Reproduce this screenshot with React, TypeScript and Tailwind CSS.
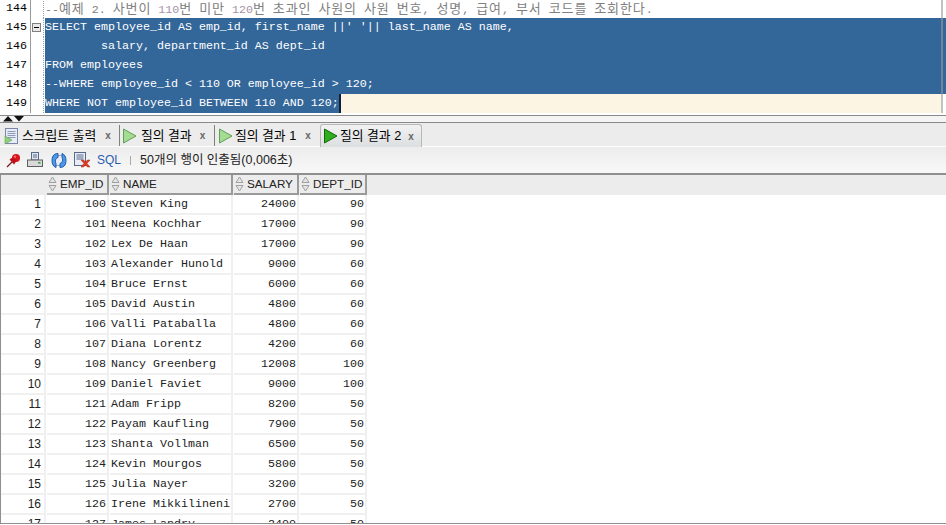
import React from "react";

const mono = "font-['Liberation_Mono',monospace] text-[11.67px]";
const kr = "font-['Liberation_Sans','Noto_Sans_CJK_KR',sans-serif]";

const rows: [number, number, string, number, number][] = [
  [1, 100, "Steven King", 24000, 90],
  [2, 101, "Neena Kochhar", 17000, 90],
  [3, 102, "Lex De Haan", 17000, 90],
  [4, 103, "Alexander Hunold", 9000, 60],
  [5, 104, "Bruce Ernst", 6000, 60],
  [6, 105, "David Austin", 4800, 60],
  [7, 106, "Valli Pataballa", 4800, 60],
  [8, 107, "Diana Lorentz", 4200, 60],
  [9, 108, "Nancy Greenberg", 12008, 100],
  [10, 109, "Daniel Faviet", 9000, 100],
  [11, 121, "Adam Fripp", 8200, 50],
  [12, 122, "Payam Kaufling", 7900, 50],
  [13, 123, "Shanta Vollman", 6500, 50],
  [14, 124, "Kevin Mourgos", 5800, 50],
  [15, 125, "Julia Nayer", 3200, 50],
  [16, 126, "Irene Mikkilineni", 2700, 50],
  [17, 127, "James Landry", 2400, 50],
];

const code = [
  "SELECT employee_id AS emp_id, first_name ||' '|| last_name AS name,",
  "        salary, department_id AS dept_id",
  "FROM employees",
  "--WHERE employee_id < 110 OR employee_id > 120;",
  "WHERE NOT employee_id BETWEEN 110 AND 120;",
];

const comment = "--예제 2. 사번이 110번 미만 120번 초과인 사원의 사원 번호, 성명, 급여, 부서 코드를 조회한다.";

function Comment() {
  return (
    <span className={`${mono} whitespace-pre pt-px text-[#808080]`}>
      {comment.split(/([가-힣]+|\d{3})/).map((part, i) =>
        /[가-힣]/.test(part) ? (
          <span key={i} className="font-['Noto_Sans_CJK_KR',sans-serif] text-[13px] tracking-[0.9px]">{part}</span>
        ) : /\d{3}/.test(part) ? (
          <span key={i} className="text-[#a593a8]">{part}</span>
        ) : (
          <span key={i}>{part}</span>
        )
      )}
    </span>
  );
}

function Play({ dark }: { dark?: boolean }) {
  return (
    <svg width="15" height="16" viewBox="0 0 15 16" className="shrink-0">
      <path d="M1.5 1 L14 8 L1.5 15 Z" fill={dark ? "#2fae1e" : "#a5dc92"} stroke={dark ? "#17660f" : "#5f9e55"} strokeWidth="1" />
    </svg>
  );
}

function ScriptIcon() {
  return (
    <svg width="15" height="16" viewBox="0 0 15 16" className="shrink-0">
      <rect x="1.5" y="0.5" width="12" height="15" fill="#e8ecf6" stroke="#7c86a8" />
      <path d="M3.5 3.5H11.5M3.5 5.5H11.5M3.5 7.5H11.5M3.5 9.5H11.5" stroke="#8e98bb" />
      <path d="M1 8 L8 12 L1 16 Z" fill="#8fd07a" stroke="#5f9e55" strokeWidth="0.6" />
    </svg>
  );
}

function TabText({ label, cls, xCls }: { label: string; cls: string; xCls: string }) {
  return (
    <>
      <span className={`${kr} ${cls} text-[12.8px] whitespace-nowrap text-black`}>{label}</span>
      <span className={`${xCls} font-['Liberation_Sans',sans-serif] text-[10px] font-bold text-[#666]`}>x</span>
    </>
  );
}

function HeaderCell({ w, label }: { w: string; label: string }) {
  return (
    <div className={`${w} ml-px flex h-[20px] shrink-0 items-center border-r-2 border-b-2 border-[#9a9a9a]`}>
      <svg width="11" height="16" viewBox="0 0 11 16" className="shrink-0">
        <path d="M5.5 1 L9 6.5 H2 Z M5.5 15 L2 9.5 H9 Z" fill="#e4e4e4" stroke="#a0a0a0" />
      </svg>
      <span className={`${kr} ml-[2px] text-[11.7px] text-[#222]`}>{label}</span>
    </div>
  );
}

const cell = "ml-px flex shrink-0 items-center border-r-2 border-b-2 border-[#f0f0f0] pt-px text-[#222]";

export default function App() {
  return (
    <div className="flex h-[525px] w-[946px] flex-col overflow-hidden bg-white">
      {/* editor */}
      <div className="relative flex h-[113px] shrink-0 flex-col justify-end overflow-hidden bg-white">
        <div className="flex h-[19px] shrink-0 items-center">
          <div className={`flex h-full w-[31px] shrink-0 items-center justify-end border-r border-[#9a9a9a] pt-px pr-[3px] ${mono} text-black`}>144</div>
          <div className="h-full w-[13px] shrink-0 border-r border-dotted border-[#a0a0a0]" />
          <div className="w-px shrink-0" />
          <Comment />
        </div>
        {code.map((line, i) => (
          <div key={i} className="flex h-[19px] shrink-0 items-center">
            <div className={`flex h-full w-[31px] shrink-0 items-center justify-end border-r border-[#9a9a9a] pt-px pr-[3px] ${mono} text-black`}>{145 + i}</div>
            <div className="flex h-full w-[13px] shrink-0 items-center border-r border-dotted border-[#a0a0a0] pl-px">
              {i === 0 && (
                <div className="flex h-[9px] w-[9px] items-center justify-center border border-[#808080] bg-[#e8e8e8]">
                  <div className="h-px w-[5px] bg-black" />
                </div>
              )}
            </div>
            <div className="w-px shrink-0" />
            {i === 4 ? (
              <div className="flex h-full w-[896px] shrink-0 bg-[#fdf5e3]">
                <div className={`flex h-full w-[296px] items-center border-r-2 border-[#10203a] bg-[#336699] pt-px ${mono} whitespace-pre text-white`}>{line}</div>
              </div>
            ) : (
              <div className={`flex h-full flex-1 items-center bg-[#336699] pt-px ${mono} whitespace-pre text-white`}>{line}</div>
            )}
          </div>
        ))}
        <div className="absolute top-0 bottom-0 left-[941px] w-[2px] bg-[#999999] opacity-60" />
      </div>

      {/* splitter */}
      <div className="mt-[2px] flex h-[8px] shrink-0 items-center border-y border-[#8a8a8a] bg-[#f4f4f4] pl-[3px]">
        <svg width="21" height="6" viewBox="0 0 21 6">
          <path d="M0 5.5 L5 0 L10 5.5 Z M11 0 L21 0 L16 5.5 Z" fill="#111" />
        </svg>
      </div>

      {/* tabs */}
      <div className="flex h-[24px] shrink-0 items-end border-b border-white bg-[#ececec] pl-[4px]">
        <div className="flex h-[21px] w-[116px] shrink-0 items-center border-r border-[#808080]">
          <ScriptIcon />
          <TabText label="스크립트 출력" cls="ml-[3px]" xCls="ml-[9px]" />
        </div>
        <div className="flex h-[21px] w-[95px] shrink-0 items-center border-r border-[#808080] pl-[2px]">
          <Play />
          <TabText label="질의 결과" cls="ml-[4px]" xCls="ml-[8px]" />
        </div>
        <div className="flex h-[21px] w-[105px] shrink-0 items-center pl-[3px]">
          <Play />
          <TabText label="질의 결과 1" cls="ml-[2px]" xCls="ml-[9px]" />
        </div>
        <div className="-mb-px flex h-[23px] w-[102px] shrink-0 items-center rounded-t-[3px] border border-b-0 border-[#b8b8b8] bg-gradient-to-b from-[#f2f2f2] to-[#dcdee0] pl-[2px]">
          <Play dark />
          <TabText label="질의 결과 2" cls="ml-[2px]" xCls="ml-[7px]" />
        </div>
      </div>

      {/* toolbar */}
      <div className="flex h-[26px] shrink-0 items-center bg-gradient-to-b from-[#ececec] to-[#f8f8f8] pl-[6px]">
        <svg width="15" height="15" viewBox="0 0 15 15" className="shrink-0">
          <path d="M1 14 L6 9" stroke="#7a1a1a" strokeWidth="1.2" />
          <circle cx="10" cy="5" r="4" fill="#d8141c" />
          <path d="M3.5 6.5 L8 11.5 L10.5 8 L7 4 Z" fill="#c01018" />
          <circle cx="9" cy="3.8" r="1.2" fill="#f26a6a" />
        </svg>
        <svg width="16" height="16" viewBox="0 0 16 16" className="ml-[6px] shrink-0">
          <rect x="4.5" y="0.5" width="7" height="7.5" fill="#dfe6f2" stroke="#5a6a8a" />
          <path d="M6 3H10M6 5H10" stroke="#5a6a8a" />
          <rect x="0.5" y="8" width="15" height="6.5" fill="#d9d9d9" stroke="#5f5f5f" />
          <rect x="11" y="10" width="2.5" height="1.5" fill="#32a032" />
        </svg>
        <svg width="16" height="17" viewBox="0 0 16 16" className="ml-[8px] shrink-0">
          <rect x="4" y="3" width="8" height="10" fill="#e8ecf6" stroke="#7c86a8" strokeWidth="0.7" />
          <path d="M7 1 C2 1 1 5 1 8 C1 11 2 14 5 15 L5 11 C4 9 4 6 7 5 Z" fill="#4f97e6" stroke="#1d5eae" />
          <path d="M9 15 C14 15 15 11 15 8 C15 5 14 2 11 1 L11 5 C12 7 12 10 9 11 Z" fill="#4f97e6" stroke="#1d5eae" />
        </svg>
        <svg width="17" height="16" viewBox="0 0 17 16" className="ml-[7px] shrink-0">
          <rect x="0.5" y="0.5" width="11" height="13" fill="#e8ecf6" stroke="#5a6a8a" />
          <path d="M2.5 3H9.5M2.5 5H9.5M2.5 7H9.5" stroke="#5a6a8a" />
          <path d="M7 8 L9.5 8 L11.5 10 L13.5 8 L16 8 L13 11.5 L16 15 L13.5 15 L11.5 13 L9.5 15 L7 15 L10 11.5 Z" fill="#e23a1f" stroke="#a32410" strokeWidth="0.5" />
        </svg>
        <span className={`${kr} ml-[6px] text-[12px] text-[#2a5db0]`}>SQL</span>
        <div className="ml-[9px] h-[9px] w-px bg-[#a8a8a8]" />
        <span className={`${kr} ml-[9px] text-[12.5px] text-[#222]`}>50개의 행이 인출됨(0,006초)</span>
      </div>

      {/* grid */}
      <div className="mb-px flex min-h-0 flex-1 flex-col overflow-hidden border-t-2 border-b border-l border-[#8f8f8f] bg-white">
        <div className="flex shrink-0 bg-[#ececec]">
          <div className="h-[20px] w-[45px] shrink-0" />
          <HeaderCell w="w-[62px]" label="EMP_ID" />
          <HeaderCell w="w-[123px]" label="NAME" />
          <HeaderCell w="w-[65px]" label="SALARY" />
          <HeaderCell w="w-[67px]" label="DEPT_ID" />
        </div>
        {rows.map(([n, id, name, sal, dept]) => (
          <div key={n} className="flex h-[20px] shrink-0">
            <div className={`${kr} flex w-[45px] shrink-0 items-center justify-end border-r-2 border-b-2 border-[#f0f0f0] pr-[3px] text-[12px] text-[#222]`}>{n}</div>
            <div className={`${mono} ${cell} w-[62px] justify-end pr-[1px]`}>{id}</div>
            <div className={`${mono} ${cell} w-[123px] pl-px whitespace-pre`}>{name}</div>
            <div className={`${mono} ${cell} w-[65px] justify-end pr-[1px]`}>{sal}</div>
            <div className={`${mono} ${cell} w-[67px] justify-end pr-[1px]`}>{dept}</div>
          </div>
        ))}
      </div>
    </div>
  );
}
